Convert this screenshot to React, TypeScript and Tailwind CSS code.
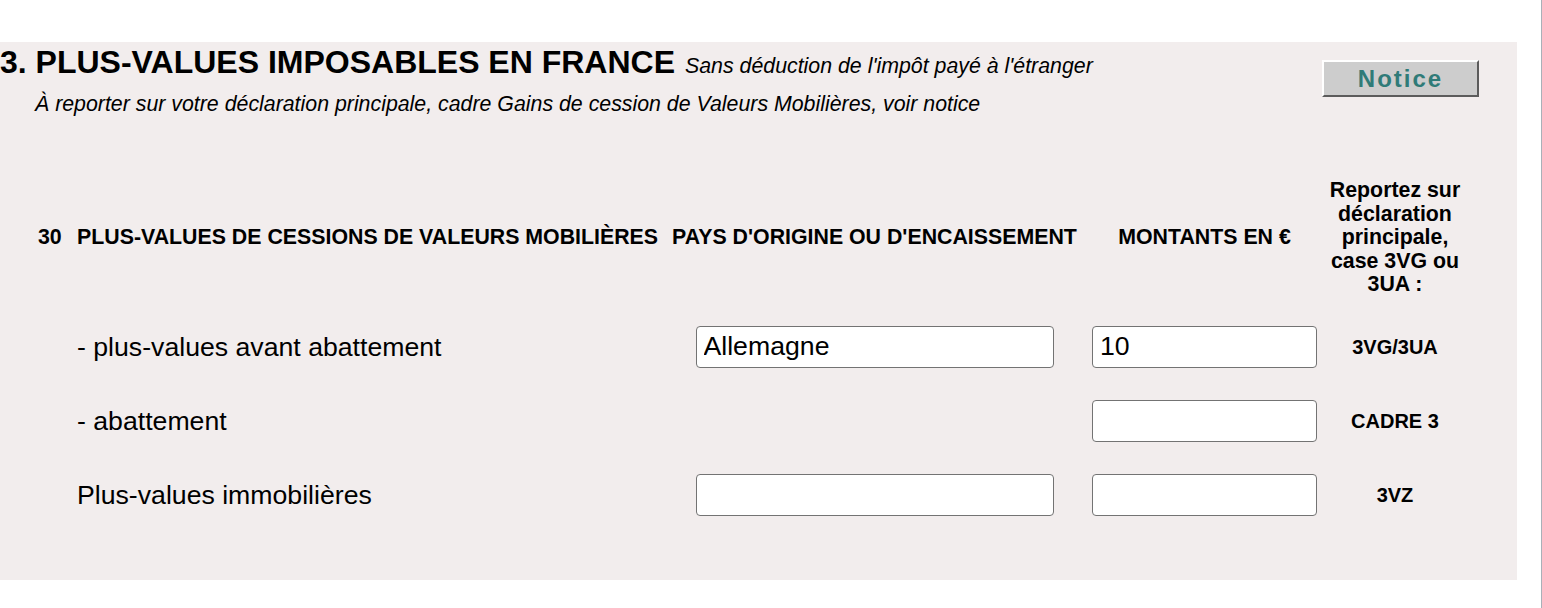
import React from "react";

const FONT = { fontFamily: '"Liberation Sans", Arial, Helvetica, sans-serif' };

function Field({ value, w }: { value?: string; w: string }) {
  return (
    <input
      readOnly
      value={value ?? ""}
      className={`${w} h-[42px] rounded-[4px] border border-[#737373] bg-white pl-[7px] text-[26.67px] text-black outline-none`}
    />
  );
}

const rowGrid = "grid grid-cols-[38px_39px_590px_415px_245px_136px] items-center";

export default function App() {
  return (
    <div className="flex h-[608px] w-[1542px] bg-white text-black" style={FONT}>
      <div className="w-[1541px]">
        <div className="mt-[42px] h-[538px] w-[1517px] bg-[#f2eded] pt-[2px]">
          <div className="flex justify-between">
            <div>
              <div className="flex items-baseline whitespace-nowrap leading-[36px]">
                <span className="text-[32px] font-bold">3. PLUS-VALUES IMPOSABLES EN FRANCE</span>
                <span className="ml-[10px] text-[21.33px] italic">Sans déduction de l'impôt payé à l'étranger</span>
              </div>
              <div className="mt-[8px] pl-[35px] text-[21.33px] italic leading-[24px] whitespace-nowrap">
                À reporter sur votre déclaration principale, cadre Gains de cession de Valeurs Mobilières, voir notice
              </div>
            </div>
            <div className="mr-[38px] mt-[16px]">
              <div className="flex h-[37px] w-[157px] items-center justify-center border-2 border-t-white border-l-white border-b-[#5c5c5c] border-r-[#5c5c5c] bg-[#cdcdcd] text-[24px] font-bold tracking-[2px] text-[#2f7b78]">
                Notice
              </div>
            </div>
          </div>

          <div className={`${rowGrid} mt-[63px] text-[21.33px] font-bold`}>
            <div />
            <div>30</div>
            <div className="whitespace-nowrap">PLUS-VALUES DE CESSIONS DE VALEURS MOBILIÈRES</div>
            <div className="justify-self-center whitespace-nowrap">PAYS D'ORIGINE OU D'ENCAISSEMENT</div>
            <div className="justify-self-center whitespace-nowrap">MONTANTS EN €</div>
            <div className="justify-self-center whitespace-nowrap text-center leading-[23.5px]">
              Reportez sur
              <br />
              déclaration
              <br />
              principale,
              <br />
              case 3VG ou
              <br />
              3UA :
            </div>
          </div>

          <div className="mt-[29px] flex flex-col gap-[32px]">
            <div className={rowGrid}>
              <div />
              <div />
              <div className="text-[26.67px]">- plus-values avant abattement</div>
              <div className="justify-self-center">
                <Field value="Allemagne" w="w-[358px]" />
              </div>
              <div className="justify-self-center">
                <Field value="10" w="w-[225px]" />
              </div>
              <div className="justify-self-center text-[20px] font-bold">3VG/3UA</div>
            </div>
            <div className={rowGrid}>
              <div />
              <div />
              <div className="text-[26.67px]">- abattement</div>
              <div />
              <div className="justify-self-center">
                <Field w="w-[225px]" />
              </div>
              <div className="justify-self-center text-[20px] font-bold">CADRE 3</div>
            </div>
            <div className={rowGrid}>
              <div />
              <div />
              <div className="text-[26.67px]">Plus-values immobilières</div>
              <div className="justify-self-center">
                <Field w="w-[358px]" />
              </div>
              <div className="justify-self-center">
                <Field w="w-[225px]" />
              </div>
              <div className="justify-self-center text-[20px] font-bold">3VZ</div>
            </div>
          </div>
        </div>
      </div>
      <div className="w-px bg-[#a9b0b8]" />
    </div>
  );
}
